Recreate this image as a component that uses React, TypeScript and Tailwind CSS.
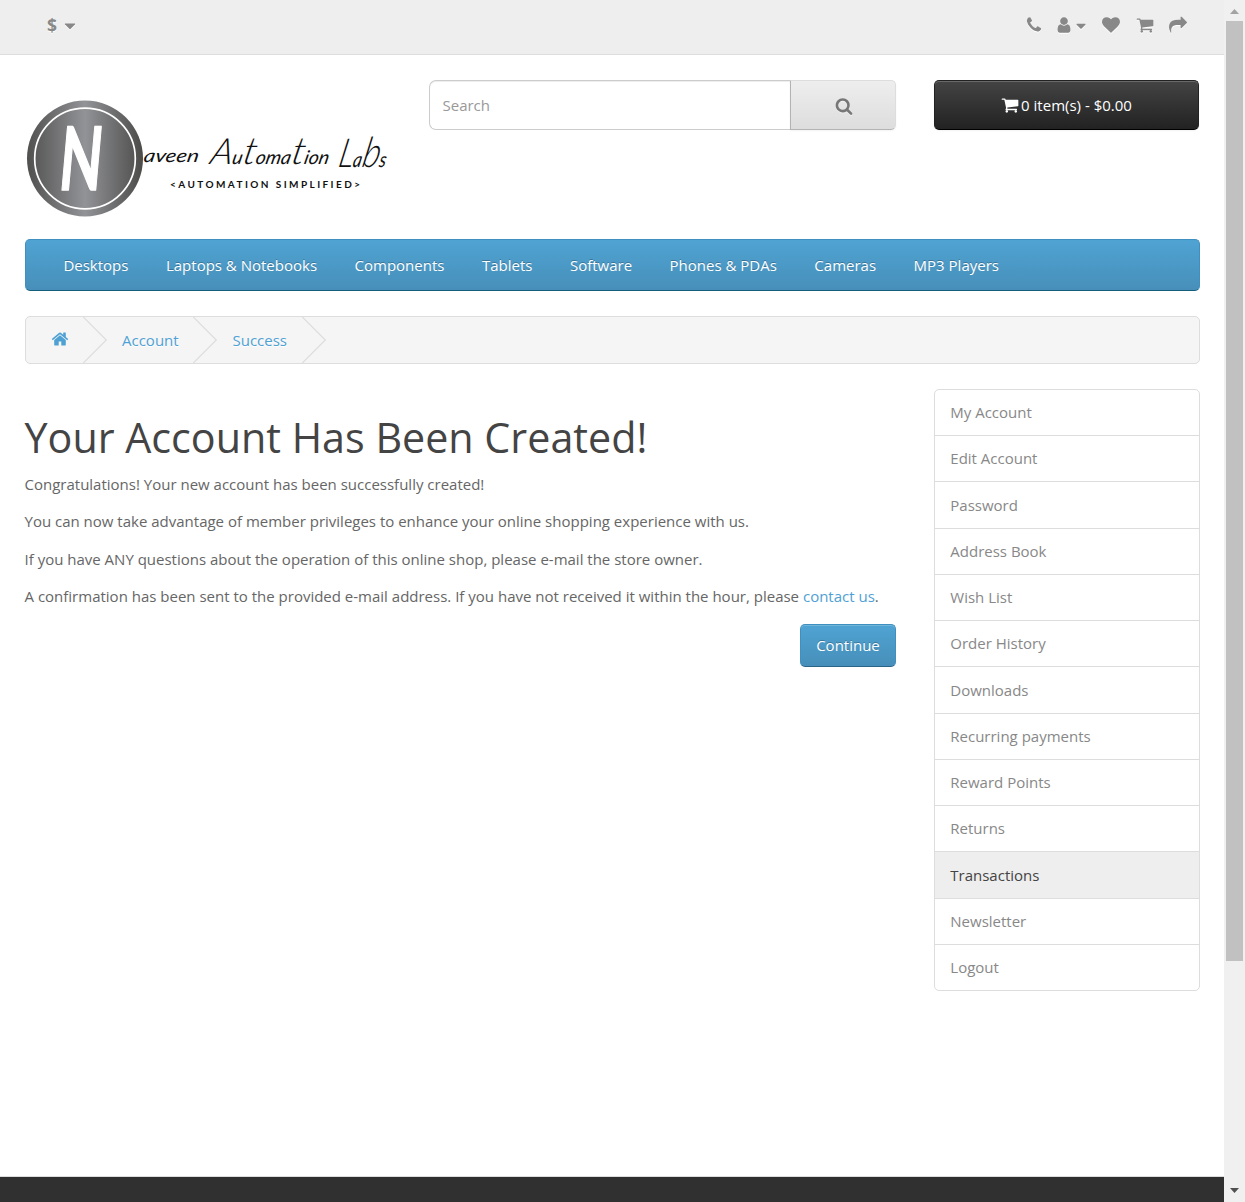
import React from 'react';

const icons = {
  phone:
    'M1600 1240q0 27-10 70.5t-21 68.5q-21 50-122 106-94 51-186 51-27 0-52.5-3.5t-57.5-12.5-47.5-14.5-55.5-20.5-49-18q-98-35-175-83-128-79-264.5-215.5t-215.5-264.5q-48-77-83-175-3-9-18-49t-20.5-55.5-14.5-47.5-12.5-57.5-3.5-52.5q0-92 51-186 56-101 106-122 25-11 68.5-21t70.5-10q14 0 21 3 18 6 53 76 11 19 30 54t35 63.5 31 53.5q3 4 17.5 25t21.5 35.5 7 28.5q0 20-28.5 50t-62 55-62 53-28.5 46q0 9 5 22.5t8.5 20.5 14 24 11.5 19q76 137 174 235t235 174q2 1 19 11.5t24 14 20.5 8.5 22.5 5q18 0 46-28.5t53-62 55-62 50-28.5q14 0 28.5 7t35.5 21.5 25 17.5q25 15 53.5 31t63.5 35 54 30q70 35 76 53 3 7 3 21z',
  user:
    'M1536 1399q0 109-62.5 187t-150.5 78h-854q-88 0-150.5-78t-62.5-187q0-85 8.5-160.5t31.5-152 58.5-131 94-89 134.5-34.5q131 128 313 128t313-128q76 0 134.5 34.5t94 89 58.5 131 31.5 152 8.5 160.5zm-256-887q0 159-112.5 271.5t-271.5 112.5-271.5-112.5-112.5-271.5 112.5-271.5 271.5-112.5 271.5 112.5 112.5 271.5z',
  heart:
    'M896 1664q-26 0-44-18l-624-602q-10-8-27.5-26t-55.5-65.5-68-97.5-53.5-121-23.5-138q0-220 127-344t351-124q62 0 126.5 21.5t120 58 95.5 68.5 76 68q36-36 76-68t95.5-68.5 120-58 126.5-21.5q224 0 351 124t127 344q0 221-229 450l-623 600q-18 18-44 18z',
  cart:
    'M704 1536q0 52-38 90t-90 38-90-38-38-90 38-90 90-38 90 38 38 90zm896 0q0 52-38 90t-90 38-90-38-38-90 38-90 90-38 90 38 38 90zm128-1088v512q0 24-16.5 42.5t-40.5 21.5l-1044 122q13 60 13 70 0 16-24 64h920q26 0 45 19t19 45-19 45-45 19h-1024q-26 0-45-19t-19-45q0-11 8-31.5t16-36 21.5-40 15.5-29.5l-177-823h-204q-26 0-45-19t-19-45 19-45 45-19h256q16 0 28.5 6.5t19.5 15.5 13 24.5 8 26 5.5 29.5 4.5 26h1201q26 0 45 19t19 45z',
  share:
    'M1792 640q0 26-19 45l-512 512q-19 19-45 19t-45-19-19-45v-256h-224q-98 0-175.5 6t-154 21.5-133 42.5-105.5 69.5-80 101-48.5 138.5-17.5 181q0 55 5 123 0 6 2.5 23.5t2.5 26.5q0 15-8.5 25t-23.5 10q-16 0-28-17-7-9-13-22t-13.5-30-10.5-24q-127-285-127-451 0-199 53-333 162-403 875-403h224v-256q0-26 19-45t45-19 45 19l512 512q19 19 19 45z',
  search:
    'M1216 832q0-185-131.5-316.5t-316.5-131.5-316.5 131.5-131.5 316.5 131.5 316.5 316.5 131.5 316.5-131.5 131.5-316.5zm512 832q0 52-38 90t-90 38q-54 0-90-38l-343-342q-179 124-399 124-143 0-273.5-55.5t-225-150-150-225-55.5-273.5 55.5-273.5 150-225 225-150 273.5-55.5 273.5 55.5 225 150 150 225 55.5 273.5q0 220-124 399l343 343q37 37 37 90z',
  home:
    'M1472 992v480q0 26-19 45t-45 19h-384v-384h-256v384h-384q-26 0-45-19t-19-45v-480q0-1 .5-3t.5-3l575-474 575 474q1 2 1 6zm223-69l-62 74q-8 9-21 11h-3q-13 0-21-7l-692-577-692 577q-12 8-24 7-13-2-21-11l-62-74q-8-10-7-23.5t11-21.5l719-599q32-26 76-26t76 26l244 204v-195q0-14 9-23t23-9h192q14 0 23 9t9 23v408l219 182q10 8 11 21.5t-7 23.5z',
  caret:
    'M1408 704q0 26-19 45l-448 448q-19 19-45 19t-45-19l-448-448q-19-19-19-45t19-45 45-19h896q26 0 45 19t19 45z',
};

function Icon({ name, className = '' }: { name: keyof typeof icons; className?: string }) {
  return (
    <svg viewBox="0 0 1792 1792" fill="currentColor" className={`size-[18px] shrink-0 ${className}`}>
      <path d={icons[name]} />
    </svg>
  );
}

function Logo() {
  return (
    <svg viewBox="0 0 375 120" className="mt-[19px] h-[120px] w-[375px]">
      <defs>
        <linearGradient id="disc">
          <stop offset="0" stopColor="#50504f" />
          <stop offset="0.5" stopColor="#929397" />
          <stop offset="1" stopColor="#4b4b49" />
        </linearGradient>
      </defs>
      <circle cx="60" cy="59.500" r="58" fill="url(#disc)" />
      <circle cx="60" cy="59.500" r="50.300" fill="none" stroke="#fff" strokeWidth="1.700" />
      <text
        transform="translate(32.500 91) skewX(-5) scale(0.630 1)"
        fontSize="88"
        fontFamily="Lato"
        fontWeight="700"
        fill="#fff"
        stroke="#fff"
        strokeWidth="1.500"
        strokeLinejoin="round"
      >
        N
      </text>
      <g fontFamily="Lato" fontStyle="italic" fontWeight="400" fill="#111">
        <text transform="translate(118 63) skewX(-10)" fontSize="18" textLength="55" lengthAdjust="spacingAndGlyphs">
          aveen
        </text>
        <text
          transform="translate(184 65) skewX(-12)"
          fontSize="19"
          textLength="119"
          lengthAdjust="spacingAndGlyphs"
        >
          <tspan fontSize="36" fontWeight="300">A</tspan>u<tspan fontSize="38" fontWeight="300">t</tspan>oma
          <tspan fontSize="38" fontWeight="300">t</tspan>ion
        </text>
        <text transform="translate(312 68) skewX(-12)" fontSize="21" textLength="48" lengthAdjust="spacingAndGlyphs">
          <tspan fontSize="40" fontWeight="300">L</tspan>a<tspan fontSize="42" fontWeight="300">b</tspan>s
        </text>
      </g>
      <text x="145" y="88.500" fontSize="10" fontFamily="Lato" fontWeight="700" fill="#111" textLength="190">
        &lt;AUTOMATION SIMPLIFIED&gt;
      </text>
    </svg>
  );
}

const categories = [
  'Desktops',
  'Laptops & Notebooks',
  'Components',
  'Tablets',
  'Software',
  'Phones & PDAs',
  'Cameras',
  'MP3 Players',
];

const accountLinks = [
  'My Account',
  'Edit Account',
  'Password',
  'Address Book',
  'Wish List',
  'Order History',
  'Downloads',
  'Recurring payments',
  'Reward Points',
  'Returns',
  'Transactions',
  'Newsletter',
  'Logout',
];

function Separator() {
  return (
    <svg viewBox="0 0 26 46" className="h-[46px] w-[26px] shrink-0" fill="none" stroke="#ddd" strokeWidth="1.250">
      <path d="M0.300 0L23.300 23L0.300 46" />
    </svg>
  );
}

function TopBar() {
  return (
    <div className="flex h-[55px] items-start justify-between border-b border-[#ddd] bg-[#eee] pr-[37px] pl-[47px] text-[#888]">
      <div className="flex items-center pt-[14px] [&_svg]:drop-shadow-[0_1px_0_#fff]">
        <span className="text-[17.5px] leading-[22px] font-bold [text-shadow:0_1px_0_#fff]">$</span>
        <Icon name="caret" className="mt-[1px] ml-[4px]" />
      </div>
      <div className="flex items-center pt-[16px] [&_svg]:drop-shadow-[0_1px_0_#fff]">
        <Icon name="phone" />
        <Icon name="user" className="ml-[12px]" />
        <Icon name="caret" className="mt-[2px] size-[16px]!" />
        <Icon name="heart" className="ml-[13px]" />
        <Icon name="cart" className="ml-[16px]" />
        <Icon name="share" className="ml-[15px]" />
      </div>
    </div>
  );
}

function Header() {
  return (
    <header className="flex h-[159px] items-start">
      <div className="w-[404px]">
        <Logo />
      </div>
      <div className="flex h-[50px] w-[467px]">
        <input
          placeholder="Search"
          className="h-full w-[361px] rounded-l-[7px] border border-r-0 border-[#ccc] bg-white pl-[12.500px] shadow-[inset_0_1px_1px_rgba(0,0,0,0.075)] placeholder:text-[#999]"
        />
        <button className="flex h-full w-[106px] items-center justify-center rounded-r-[5px] border border-[#ddd] border-b-[#b3b3b3] border-l-[#b3b3b3] bg-linear-to-b from-[#eee] to-[#ddd] pt-px pl-px text-[#777] shadow-[0_1px_2px_rgba(0,0,0,0.05)]">
          <Icon name="search" className="drop-shadow-[0_1px_0_rgba(255,255,255,0.5)]" />
        </button>
      </div>
      <button className="ml-[38px] flex h-[50px] w-[265px] items-center justify-center rounded-[5px] border border-[#222] border-b-black bg-linear-to-b from-[#444] to-[#222] text-white shadow-[inset_0_1px_0_rgba(255,255,255,0.2),0_1px_2px_rgba(0,0,0,0.05)]">
        <Icon name="cart" className="mr-[2px]" />
        0 item(s) - $0.00
      </button>
    </header>
  );
}

function Nav() {
  return (
    <nav className="flex h-[52px] w-[1175px] items-center gap-[37.500px] rounded-[5px] border border-[#3f8fc0] border-b-[#145e7a] bg-linear-to-b from-[#4fa3d3] to-[#478fba] pl-[37.400px] text-white">
      {categories.map((c) => (
        <a key={c} className="whitespace-nowrap [text-shadow:0_-1px_0_rgba(0,0,0,0.25)]">
          {c}
        </a>
      ))}
    </nav>
  );
}

function Breadcrumb() {
  return (
    <div className="mt-[25px] flex h-[48px] w-[1175px] items-center rounded-[5px] border border-[#ddd] bg-[#f5f5f5] text-[#4fa1d4]">
      <div className="flex w-[57px] pl-[24.500px]">
        <Icon name="home" className="-mt-[2px]" />
      </div>
      <Separator />
      <a className="w-[84px] pl-[13px] [text-shadow:0_1px_0_#fff]">Account</a>
      <Separator />
      <a className="w-[83px] pl-[13.500px] [text-shadow:0_1px_0_#fff]">Success</a>
      <Separator />
    </div>
  );
}

function Sidebar() {
  return (
    <ul className="ml-[38px] h-[602px] w-[266px] shrink-0 rounded-[5px] border border-[#ddd] text-[#888]">
      {accountLinks.map((l) => (
        <li
          key={l}
          className={`flex h-[46.240px] items-center border-b border-[#ddd] pl-[15.300px] last:border-b-0 ${
            l === 'Transactions' ? 'bg-[#eee] pt-px text-[#444]' : ''
          }`}
        >
          {l}
        </li>
      ))}
    </ul>
  );
}

function Content() {
  return (
    <main className="-ml-[0.500px] w-[871.500px] shrink-0 pt-[26px] text-[#666]">
      <h1 className="text-[41.250px] leading-[45px] whitespace-nowrap text-[#444]">Your Account Has Been Created!</h1>
      <div className="mt-[11.500px] flex flex-col gap-[12.500px] leading-[25px] whitespace-nowrap">
        <p>Congratulations! Your new account has been successfully created!</p>
        <p>You can now take advantage of member privileges to enhance your online shopping experience with us.</p>
        <p>If you have ANY questions about the operation of this online shop, please e-mail the store owner.</p>
        <p>
          A confirmation has been sent to the provided e-mail address. If you have not received it within the hour,
          please <a className="text-[#4fa1d4]">contact us</a>.
        </p>
      </div>
      <div className="mt-[15px] flex justify-end">
        <button className="h-[43px] w-[96px] rounded-[5px] border border-[#3f8fc0] border-b-[#2b6586] bg-linear-to-b from-[#4fa3d3] to-[#478fba] text-white shadow-[inset_0_1px_0_rgba(255,255,255,0.2)] [text-shadow:0_-1px_0_rgba(0,0,0,0.25)]">
          Continue
        </button>
      </div>
    </main>
  );
}

function Scrollbar() {
  return (
    <div className="flex w-[21px] flex-col items-center bg-[#f0f0f0]">
      <div className="flex h-[21px] items-center justify-center pt-[2px]">
        <svg viewBox="0 0 9 5" className="h-[5px] w-[9px]" fill="#a3a3a3">
          <path d="M0 5L4.500 0L9 5z" />
        </svg>
      </div>
      <div className="h-[940px] w-[17px] bg-[#c1c1c1]" />
      <div className="mt-auto mb-[9px]">
        <svg viewBox="0 0 9 5" className="h-[5px] w-[9px]" fill="#505050">
          <path d="M0 0L4.500 5L9 0z" />
        </svg>
      </div>
    </div>
  );
}

export default function App() {
  return (
    <div className="flex h-[1202px] w-[1245px] overflow-hidden bg-white font-['Open_Sans',sans-serif] text-[15px] leading-[21px]">
      <div className="flex w-[1224px] flex-col">
        <TopBar />
        <div className="px-[25px] pt-[25px]">
          <Header />
          <Nav />
          <Breadcrumb />
          <div className="mt-[25px] flex">
            <Content />
            <Sidebar />
          </div>
        </div>
        <footer className="mt-auto h-[26px] border-t border-[#ddd] bg-[#303030]" />
      </div>
      <Scrollbar />
    </div>
  );
}
